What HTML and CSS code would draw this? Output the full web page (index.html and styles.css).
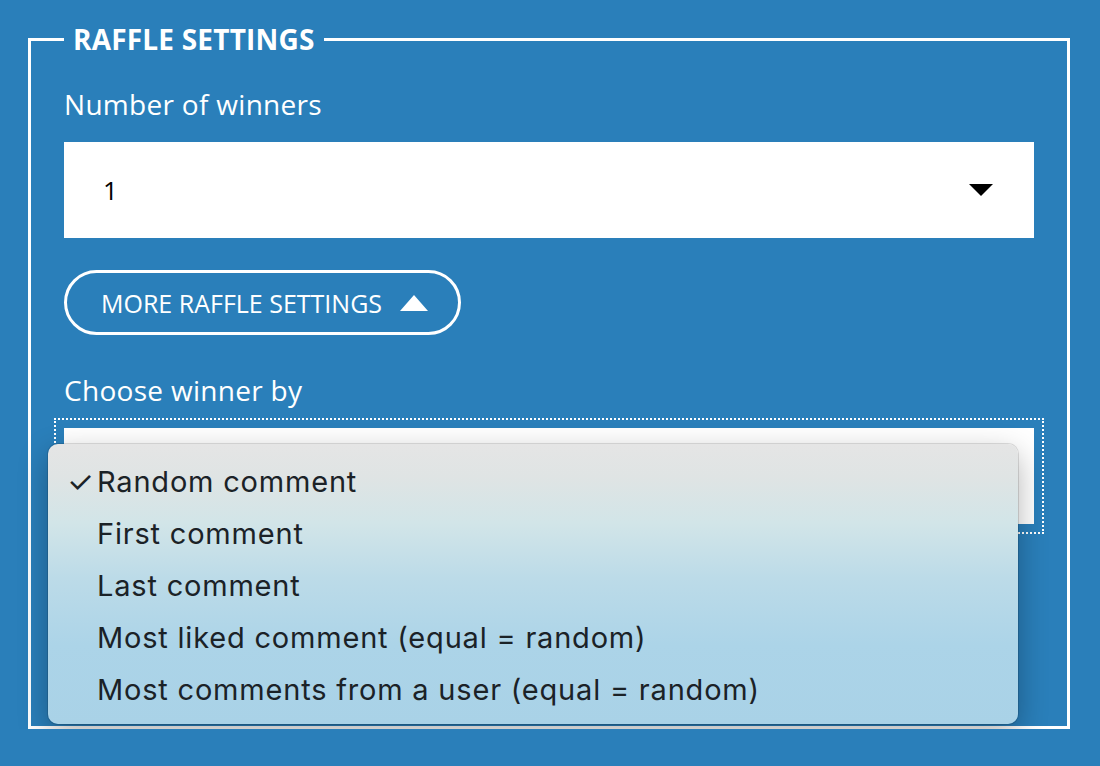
FILE: index.html
```html
<!DOCTYPE html>
<html lang="en">
<head>
<meta charset="UTF-8">
<meta name="viewport" content="width=device-width, initial-scale=1.0">
<title>Raffle settings</title>
<link rel="stylesheet" href="styles.css">
</head>
<body>

<div class="page">
    <fieldset class="settings">
        <legend>RAFFLE SETTINGS</legend>

        <label class="field-label">Number of winners</label>
        <div class="select">
            <span>1</span>
            <span class="arrow-down"></span>
        </div>

        <button class="more-btn">MORE RAFFLE SETTINGS <span class="arrow-up"></span></button>

        <label class="field-label second">Choose winner by</label>
        <div class="select-wrap">
            <div class="select focused"></div>
            <ul class="menu">
                <li class="checked">Random comment</li>
                <li>First comment</li>
                <li>Last comment</li>
                <li>Most liked comment (equal = random)</li>
                <li>Most comments from a user (equal = random)</li>
            </ul>
        </div>
    </fieldset>
</div>

</body>
</html>
```

FILE: styles.css
```css
body {
    margin: 0;
    background-color: #2a7fba;
    font-family: "Open Sans", "Noto Sans", sans-serif;
    color: #fff;
}
.page {
    padding: 24px 30px 0 28px;
}
.settings {
    margin: 0;
    border: 3px solid #fff;
    padding: 34px 33px 202px 33px;
    display: flex;
    flex-direction: column;
    align-items: flex-start;
}
legend {
    padding: 0 9px;
    font-size: 28px;
    font-weight: 700;
    line-height: 30px;
    letter-spacing: 0.2px;
}
.field-label {
    font-size: 28px;
    line-height: 32px;
    letter-spacing: 0.3px;
}
.field-label.second {
    margin-top: 39px;
}
.select {
    box-sizing: border-box;
    width: 970px;
    height: 96px;
    margin-top: 22px;
    background: #fff;
    color: #000;
    font-size: 26px;
    display: flex;
    align-items: center;
    justify-content: space-between;
    padding: 0 41px 0 39px;
}
.arrow-down {
    width: 0;
    height: 0;
    border-left: 12px solid transparent;
    border-right: 12px solid transparent;
    border-top: 12px solid #000;
}
.more-btn {
    margin-top: 32px;
    height: 65px;
    width: 397px;
    border: 3px solid #fff;
    border-radius: 33px;
    background: transparent;
    color: #fff;
    font-family: inherit;
    font-size: 25px;
    display: flex;
    align-items: center;
    padding: 0 0 0 34px;
    gap: 18px;
}
.arrow-up {
    width: 0;
    height: 0;
    border-left: 14px solid transparent;
    border-right: 14px solid transparent;
    border-bottom: 16px solid #fff;
}
.select-wrap {
    position: relative;
    margin-top: 22px;
}
.select-wrap .select {
    margin-top: 0;
}
.select.focused {
    outline: 2px dotted #fff;
    outline-offset: 8px;
}
.menu {
    position: absolute;
    left: -16px;
    top: 16px;
    width: 970px;
    height: 280px;
    box-sizing: border-box;
    margin: 0;
    padding: 12px 0 0 0;
    list-style: none;
    border-radius: 10px;
    background: linear-gradient(to bottom, #e5e5e5 0%, #dfe4e4 12%, #d2e5e8 28%, #bcdbe8 48%, #acd4e8 72%, #a9d2e7 100%);
    box-shadow: 0 0 0 1px rgba(0, 0, 0, 0.12), 0 10px 30px rgba(0, 0, 0, 0.3);
    font-family: Inter, "Liberation Sans", sans-serif;
    font-size: 29px;
    letter-spacing: 0.8px;
    color: #1b2227;
}
.menu li {
    height: 52px;
    line-height: 52px;
    padding-left: 49px;
    position: relative;
}
.menu li.checked::before {
    content: "\2713";
    position: absolute;
    left: 19px;
    font-size: 30px;
    letter-spacing: 0;
}
```
